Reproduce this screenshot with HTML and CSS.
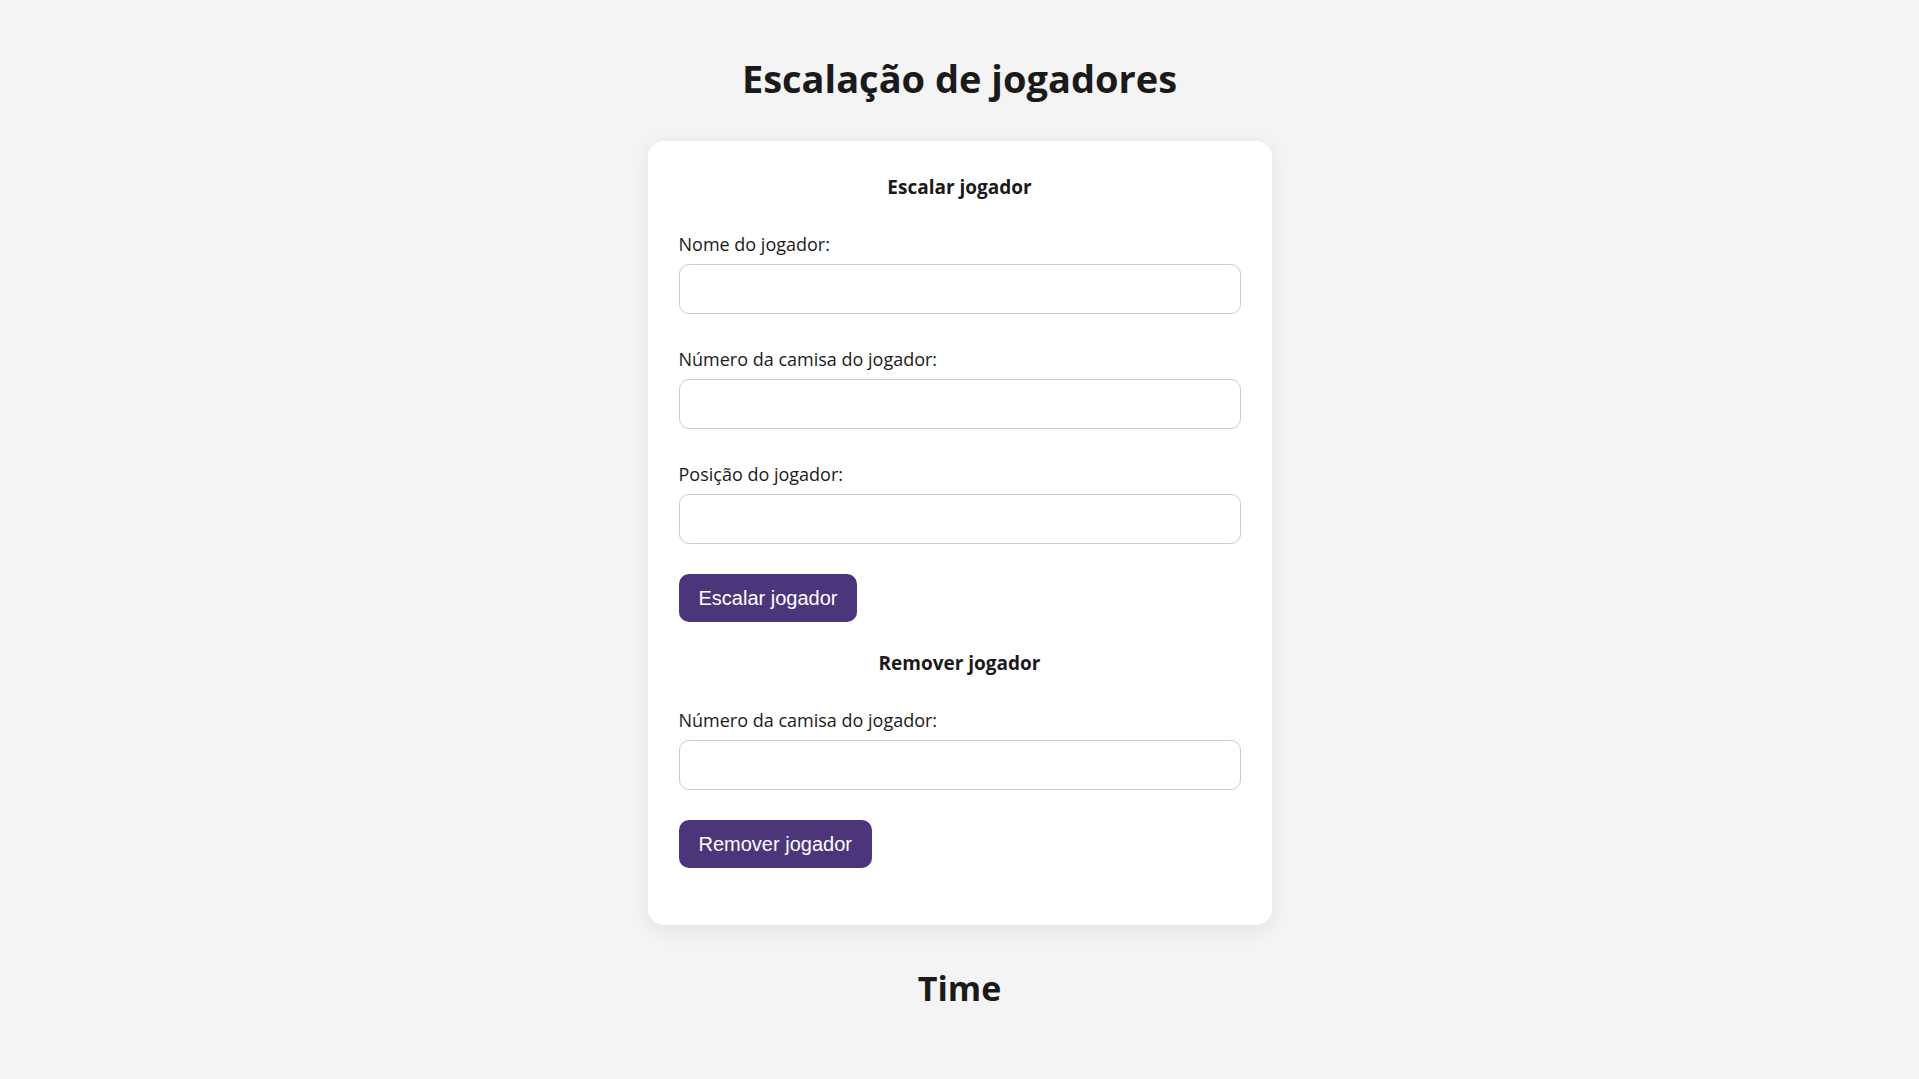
FILE: index.html
```html
<!DOCTYPE html>
<html lang="pt-BR">
<head>
<meta charset="utf-8">
<meta name="viewport" content="width=device-width, initial-scale=1">
<title>Escalação de jogadores</title>
<link rel="stylesheet" href="styles.css">
</head>
<body>
<h1>Escalação de jogadores</h1>
<main class="card">
  <form>
    <h2>Escalar jogador</h2>
    <label for="nome">Nome do jogador:</label>
    <input id="nome" type="text">
    <label for="numero">Número da camisa do jogador:</label>
    <input id="numero" type="text">
    <label for="posicao">Posição do jogador:</label>
    <input id="posicao" type="text">
    <button type="button">Escalar jogador</button>
  </form>
  <form>
    <h2>Remover jogador</h2>
    <label for="remover">Número da camisa do jogador:</label>
    <input id="remover" type="text">
    <button type="button">Remover jogador</button>
  </form>
</main>
<h2 class="team">Time</h2>
</body>
</html>
```
FILE: styles.css
```css
* { box-sizing: border-box; }
body {
  margin: 0;
  padding: 46px 20px;
  background: #f4f4f4;
  color: #1a1a1a;
  font-family: "Segoe UI", "Open Sans", "Noto Sans", sans-serif;
  font-size: 18px;
  line-height: 32px;
}
h1, h2 { margin: 0; text-align: center; font-weight: 700; }
h1 { font-size: 38px; line-height: 64px; margin-bottom: 31px; }
.card {
  max-width: 624px;
  margin: 0 auto;
  padding: 30px 31px 57px;
  background: #fff;
  border-radius: 16px;
  box-shadow: 0 5px 20px rgba(0, 0, 0, 0.08);
}
.card h2 { font-size: 19px; margin-bottom: 26px; }
form + form { margin-top: 25px; }
label { display: block; margin-bottom: 4px; line-height: 31px; }
input {
  display: block;
  width: 100%;
  height: 50px;
  margin-bottom: 30px;
  padding: 0 16px;
  border: 1px solid #ccc;
  border-radius: 10px;
  font: inherit;
}
button {
  display: block;
  height: 48px;
  padding: 0 20px;
  border: 0;
  border-radius: 10px;
  background: #4b367c;
  color: #fff;
  font: 20px "Liberation Sans", Arial, sans-serif;
}
.team { margin-top: 31px; font-size: 34px; line-height: 64px; }
```
